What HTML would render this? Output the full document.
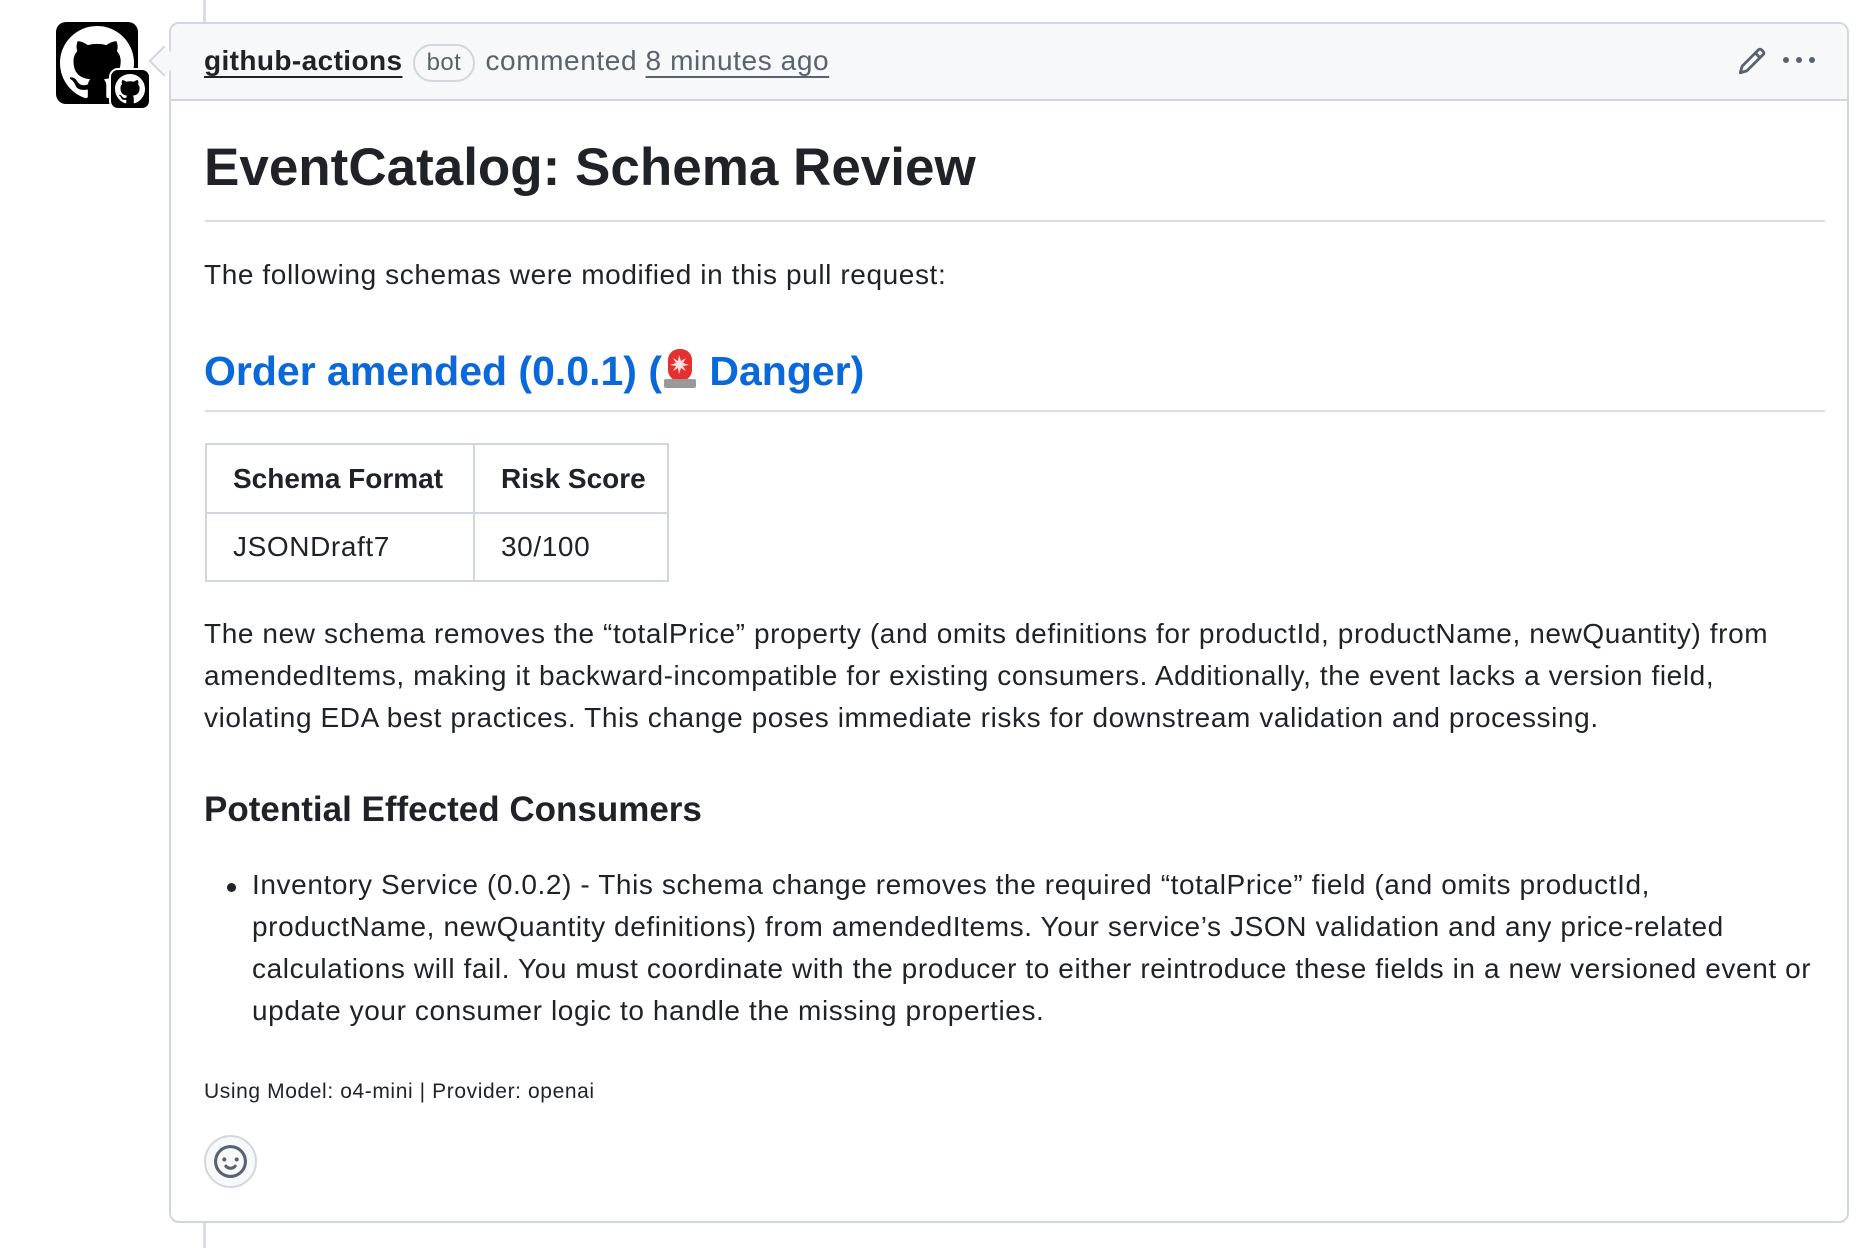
<!DOCTYPE html>
<html><head><meta charset="utf-8"><style>
*{margin:0;padding:0;box-sizing:border-box}
body{width:1868px;height:1248px;background:#fff;font-family:"Liberation Sans",sans-serif;color:#1f2328;position:relative;overflow:hidden}
.abs{position:absolute;white-space:nowrap}
.line{position:absolute;left:203px;top:0;width:3px;height:1248px;background:#d8dee4}
.box{position:absolute;left:169px;top:22px;width:1680px;height:1201px;border:2px solid #d0d7de;border-radius:10px;background:#fff}
.hdr{position:absolute;left:0;top:0;right:0;height:77px;background:#f6f8fa;border-bottom:2px solid #d0d7de;border-radius:8px 8px 0 0}
.arrow{position:absolute;left:153px;top:50px;width:22px;height:22px;background:#f6f8fa;border-left:2px solid #d0d7de;border-bottom:2px solid #d0d7de;transform:rotate(45deg)}
.p{font-size:28px;letter-spacing:.6px}
</style></head><body>
<div class="line"></div>
<div class="box"><div class="hdr"></div></div>
<div class="arrow"></div>
<div class="abs" style="left:56px;top:22px;width:82px;height:82px;background:#000;border-radius:10px"></div>
<svg class="abs" style="left:60px;top:26px" width="74" height="74" viewBox="0 0 16 16"><path fill="#fff" d="M8 0C3.58 0 0 3.58 0 8c0 3.54 2.29 6.53 5.47 7.59.4.07.55-.17.55-.38 0-.19-.01-.82-.01-1.49-2.01.37-2.53-.49-2.69-.94-.09-.23-.48-.94-.82-1.13-.28-.15-.68-.52-.01-.53.63-.01 1.08.58 1.23.82.72 1.21 1.87.87 2.33.66.07-.52.28-.87.51-1.07-1.78-.2-3.64-.89-3.64-3.95 0-.87.31-1.59.82-2.15-.08-.2-.36-1.02.08-2.12 0 0 .67-.21 2.2.82.64-.18 1.32-.27 2-.27.68 0 1.36.09 2 .27 1.53-1.04 2.2-.82 2.2-.82.44 1.1.16 1.92.08 2.12.51.56.82 1.27.82 2.15 0 3.07-1.87 3.75-3.65 3.95.29.25.54.73.54 1.48 0 1.07-.01 1.93-.01 2.2 0 .21.15.46.55.38A8.013 8.013 0 0016 8c0-4.42-3.58-8-8-8z"/></svg>
<div class="abs" style="left:109px;top:68px;width:42px;height:42px;background:#000;border:2px solid #fff;border-radius:9px"></div>
<svg class="abs" style="left:115px;top:74px" width="30" height="30" viewBox="0 0 16 16"><path fill="#fff" d="M8 0C3.58 0 0 3.58 0 8c0 3.54 2.29 6.53 5.47 7.59.4.07.55-.17.55-.38 0-.19-.01-.82-.01-1.49-2.01.37-2.53-.49-2.69-.94-.09-.23-.48-.94-.82-1.13-.28-.15-.68-.52-.01-.53.63-.01 1.08.58 1.23.82.72 1.21 1.87.87 2.33.66.07-.52.28-.87.51-1.07-1.78-.2-3.64-.89-3.64-3.95 0-.87.31-1.59.82-2.15-.08-.2-.36-1.02.08-2.12 0 0 .67-.21 2.2.82.64-.18 1.32-.27 2-.27.68 0 1.36.09 2 .27 1.53-1.04 2.2-.82 2.2-.82.44 1.1.16 1.92.08 2.12.51.56.82 1.27.82 2.15 0 3.07-1.87 3.75-3.65 3.95.29.25.54.73.54 1.48 0 1.07-.01 1.93-.01 2.2 0 .21.15.46.55.38A8.013 8.013 0 0016 8c0-4.42-3.58-8-8-8z"/></svg>
<div class="abs" style="left:204px;top:43px;font-size:28px;line-height:36px;letter-spacing:.4px">
<span style="font-weight:bold;text-decoration:underline;text-underline-offset:6px;color:#1f2328">github-actions</span>
<span style="display:inline-block;border:2px solid #d0d7de;border-radius:20px;padding:0 12px;font-size:24px;line-height:34px;color:#59636e;margin:0 2px">bot</span>
<span style="color:#59636e;letter-spacing:.6px">commented <span style="text-decoration:underline;text-underline-offset:6px">8 minutes ago</span></span>
</div>
<svg class="abs" style="left:1737px;top:46px" width="30" height="30" viewBox="0 0 16 16"><path fill="#59636e" d="M11.013 1.427a1.75 1.75 0 012.474 0l1.086 1.086a1.75 1.75 0 010 2.474l-8.61 8.61c-.21.21-.47.364-.756.445l-3.251.93a.75.75 0 01-.927-.928l.929-3.25c.081-.286.235-.547.445-.758l8.61-8.61zm.176 4.823L9.75 4.81l-6.286 6.287a.253.253 0 00-.064.108l-.558 1.953 1.953-.558a.249.249 0 00.108-.064zm1.238-3.763a.25.25 0 00-.354 0L10.811 3.75l1.439 1.44 1.263-1.263a.25.25 0 000-.354z"/></svg>
<svg class="abs" style="left:1781px;top:52px" width="36" height="16"><circle cx="5" cy="8" r="3" fill="#59636e"/><circle cx="18" cy="8" r="3" fill="#59636e"/><circle cx="31" cy="8" r="3" fill="#59636e"/></svg>
<div class="abs" style="left:204px;top:134px;font-size:53px;font-weight:bold;line-height:68px">EventCatalog: Schema Review</div>
<div class="abs" style="left:205px;top:220px;width:1620px;height:2px;background:#d8dee4"></div>
<div class="abs p" style="left:204px;top:255px;line-height:40px">The following schemas were modified in this pull request:</div>
<div class="abs" style="left:204px;top:344px;font-size:41px;font-weight:bold;color:#0969da;line-height:54px">Order amended (0.0.1) (<svg width="36" height="44" viewBox="0 0 36 44" style="vertical-align:-6px"><rect x="6" y="2" width="24" height="32" rx="11" fill="#e53030"/><rect x="2" y="32" width="32" height="9" rx="2" fill="#999"/><path d="M17 8l2 6 5-3-3 5 6 2-6 1 3 5-5-3-2 6-1-6-5 3 3-5-6-1 6-2-3-5 5 3z" fill="#fff" opacity=".85"/></svg> Danger)</div>
<div class="abs" style="left:205px;top:410px;width:1620px;height:2px;background:#d8dee4"></div>
<table class="abs" style="left:205px;top:443px;border-collapse:collapse;font-size:28px">
<tr style="height:69px"><th style="border:2px solid #d0d7de;width:268px;text-align:left;padding-left:26px">Schema Format</th><th style="border:2px solid #d0d7de;width:194px;text-align:left;padding-left:26px">Risk Score</th></tr>
<tr style="height:68px"><td style="border:2px solid #d0d7de;padding-left:26px;letter-spacing:.6px">JSONDraft7</td><td style="border:2px solid #d0d7de;padding-left:26px;letter-spacing:.6px">30/100</td></tr>
</table>
<div class="abs p" style="left:204px;top:613px;line-height:42px">The new schema removes the “totalPrice” property (and omits definitions for productId, productName, newQuantity) from<br>amendedItems, making it backward-incompatible for existing consumers. Additionally, the event lacks a version field,<br>violating EDA best practices. This change poses immediate risks for downstream validation and processing.</div>
<div class="abs" style="left:204px;top:789px;font-size:35px;font-weight:bold;line-height:42px">Potential Effected Consumers</div>
<div class="abs" style="left:227px;top:883px;width:9px;height:9px;border-radius:50%;background:#1f2328"></div>
<div class="abs p" style="left:252px;top:864px;line-height:42px">Inventory Service (0.0.2) - This schema change removes the required “totalPrice” field (and omits productId,<br>productName, newQuantity definitions) from amendedItems. Your service’s JSON validation and any price-related<br>calculations will fail. You must coordinate with the producer to either reintroduce these fields in a new versioned event or<br>update your consumer logic to handle the missing properties.</div>
<div class="abs" style="left:204px;top:1078px;font-size:21px;line-height:28px;letter-spacing:.6px">Using Model: o4-mini | Provider: openai</div>
<div class="abs" style="left:204px;top:1135px;width:53px;height:53px;border-radius:50%;background:#f6f8fa;border:2px solid #d0d7de"></div>
<svg class="abs" style="left:214px;top:1145px" width="33" height="33" viewBox="0 0 16 16"><path fill="#59636e" d="M8 0a8 8 0 110 16A8 8 0 018 0zM1.5 8a6.5 6.5 0 1013 0 6.5 6.5 0 00-13 0zm3.820 1.636a.75.75 0 011.038.175l.007.009c.103.118.22.222.35.31.264.178.683.37 1.285.37.602 0 1.02-.192 1.285-.371.13-.088.247-.192.35-.31l.007-.008a.75.75 0 011.222.87l-.022-.015c.02.013.021.015.021.015v.001l-.001.002-.002.003-.005.007-.014.019a2.066 2.066 0 01-.184.213c-.16.166-.338.316-.53.445-.63.418-1.37.638-2.127.629-.946 0-1.652-.308-2.126-.63a3.331 3.331 0 01-.715-.657l-.014-.02-.005-.006-.002-.003v-.002h-.001l.613-.432-.614.43a.75.75 0 01.183-1.044zM12 7a1 1 0 11-2 0 1 1 0 012 0zM5 8a1 1 0 100-2 1 1 0 000 2z"/></svg>
</body></html>
